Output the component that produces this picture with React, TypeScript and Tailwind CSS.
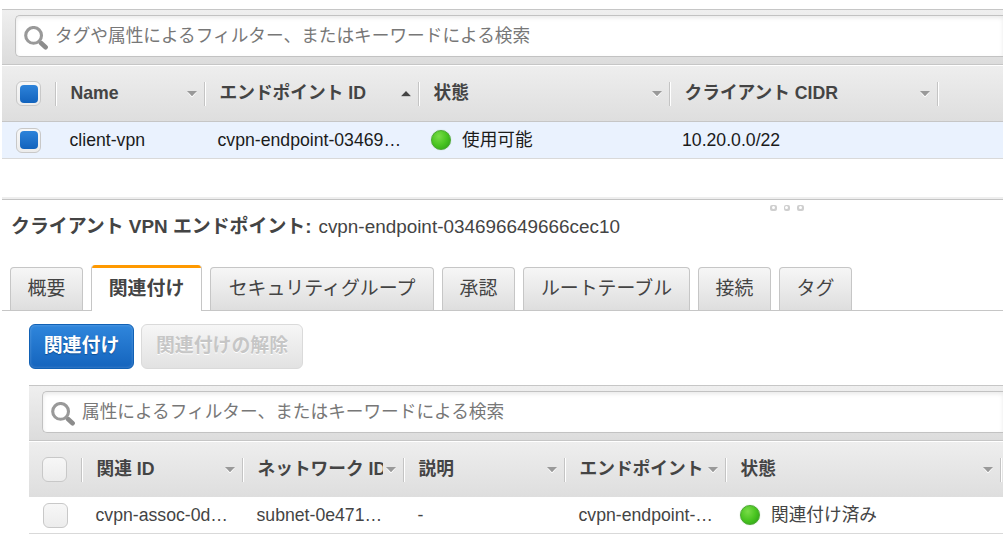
import React from "react";

type Column = { label: string; width: string; arrow?: "up" | "down"; clip?: boolean };

function SearchIcon() {
  return (
    <svg className="shrink-0" width="24" height="24" viewBox="0 0 24 24" fill="none">
      <path d="M14.8 15.2l2 2" stroke="#999" strokeWidth="3" />
      <path d="M17 17l4.6 4.2" stroke="#8c8c8c" strokeWidth="4.6" strokeLinecap="round" />
      <circle cx="9.6" cy="9.4" r="7.9" stroke="#999" strokeWidth="3.1" />
    </svg>
  );
}

function SearchBar({ text }: { text: string }) {
  return (
    <div className="h-[56px] border-y border-[#c6c6c6] bg-linear-to-b from-[#efefef] to-[#dcdcdc] pt-[5px] pl-[13px]">
      <div className="flex h-[42px] items-center rounded-l-[5px] border border-r-0 border-[#c2c2c2] bg-white pl-[8px] shadow-[inset_0_2px_4px_rgba(0,0,0,0.09)]">
        <div className="pt-[3px]">
          <SearchIcon />
        </div>
        <span className="ml-[7px] pb-px text-[17.66px] leading-[24px] text-[#777]">{text}</span>
      </div>
    </div>
  );
}

function Checkbox({ checked }: { checked?: boolean }) {
  return (
    <span className="flex size-[25px] shrink-0 items-center justify-center rounded-[6px] border border-[#c8c8c8] bg-linear-to-b from-[#f7f7f7] to-[#ececec]">
      {checked && <span className="size-[18px] rounded-[4px] bg-linear-to-b from-[#2d83da] to-[#1263bd]" />}
    </span>
  );
}

function Arrow({ up }: { up?: boolean }) {
  return (
    <svg className="shrink-0" width="10" height="6" viewBox="0 0 10 6">
      <path d={up ? "M0 6h10" : "M1 .8l4 5 4-5"} stroke="#fff" strokeWidth="1.2" fill="none" />
      <path d={up ? "M0 5.2L5 0l5 5.2z" : "M0 0h10L5 5.2z"} fill={up ? "#444" : "#999"} />
    </svg>
  );
}

function Divider() {
  return <span className="h-[24px] w-[2px] shrink-0 border-l border-[#c4c4c4] bg-white" />;
}

function HeaderCell({ column }: { column: Column }) {
  return (
    <div className={`flex h-[24px] shrink-0 items-center ${column.width}`}>
      <Divider />
      <span className={`min-w-0 flex-1 overflow-hidden pb-[2px] pl-[13.5px] leading-[24px] ${column.clip ? "mr-[3px]" : ""}`}>
        {column.label}
      </span>
      {column.arrow && (
        <span className="mr-[7px] flex">
          <Arrow up={column.arrow === "up"} />
        </span>
      )}
    </div>
  );
}

function Dot() {
  return (
    <span className="size-[20px] shrink-0 rounded-full border border-[#48a82e] bg-radial-[at_38%_30%] from-[#79dc48] via-[#4ac521] to-[#279c13] shadow-[0_0_1px_rgba(70,150,50,0.6)]" />
  );
}

const endpointColumns: Column[] = [
  { label: "Name", width: "w-[149px]", arrow: "down" },
  { label: "エンドポイント ID", width: "w-[214px]", arrow: "up" },
  { label: "状態", width: "w-[251px]", arrow: "down" },
  { label: "クライアント CIDR", width: "w-[268px]", arrow: "down" },
  { label: "", width: "w-[66px]" },
];

const associationColumns: Column[] = [
  { label: "関連 ID", width: "w-[161px]", arrow: "down" },
  { label: "ネットワーク ID", width: "w-[161px]", arrow: "down", clip: true },
  { label: "説明", width: "w-[161px]", arrow: "down" },
  { label: "エンドポイント", width: "w-[161px]", arrow: "down" },
  { label: "状態", width: "w-[275px]", arrow: "down" },
  { label: "", width: "w-[10px]" },
];

const tabs = [
  { label: "概要", width: "w-[73px]" },
  { label: "関連付け", width: "w-[111px]", active: true },
  { label: "セキュリティグループ", width: "w-[224px]" },
  { label: "承認", width: "w-[73px]" },
  { label: "ルートテーブル", width: "w-[167px]" },
  { label: "接続", width: "w-[73px]" },
  { label: "タグ", width: "w-[73px]" },
];

function EndpointTable() {
  return (
    <section className="ml-[2px]">
      <SearchBar text="タグや属性によるフィルター、またはキーワードによる検索" />
      <div className="flex h-[57px] items-center border-t border-b border-t-white border-b-[#c6c6c6] bg-linear-to-b from-[#eee] to-[#dedede] text-[17.7px] font-bold text-[#444]">
        <div className="w-[53px] shrink-0 pl-[14px]">
          <Checkbox checked />
        </div>
        {endpointColumns.map((c, i) => (
          <HeaderCell key={i} column={c} />
        ))}
      </div>
      <div className="flex h-[37px] items-center border-b border-[#d9d9d9] bg-[#eaf2fe] text-[17.66px] leading-[24px] text-[#1b1b1b]">
        <div className="w-[67.5px] shrink-0 pl-[14px]">
          <Checkbox checked />
        </div>
        <span className="w-[148px] shrink-0">client-vpn</span>
        <span className="w-[213.5px] shrink-0">cvpn-endpoint-03469…</span>
        <span className="flex w-[251px] shrink-0 items-center gap-[11px]">
          <Dot />
          使用可能
        </span>
        <span>10.20.0.0/22</span>
      </div>
    </section>
  );
}

function AssociationTable() {
  return (
    <section className="ml-[29px]">
      <SearchBar text="属性によるフィルター、またはキーワードによる検索" />
      <div className="flex h-[56px] items-center border-t border-white bg-linear-to-b from-[#eee] to-[#dedede] text-[17.7px] font-bold text-[#444]">
        <div className="w-[52px] shrink-0 pl-[13px]">
          <Checkbox />
        </div>
        {associationColumns.map((c, i) => (
          <HeaderCell key={i} column={c} />
        ))}
      </div>
      <div className="flex h-[37px] items-center border-b border-[#d9d9d9] text-[17.66px] leading-[24px] text-[#444]">
        <div className="w-[66.5px] shrink-0 pl-[14px]">
          <Checkbox />
        </div>
        <span className="w-[161px] shrink-0">cvpn-assoc-0d…</span>
        <span className="w-[161px] shrink-0">subnet-0e471…</span>
        <span className="w-[161px] shrink-0">-</span>
        <span className="w-[161.5px] shrink-0">cvpn-endpoint-…</span>
        <span className="flex items-center gap-[11px]">
          <Dot />
          関連付け済み
        </span>
      </div>
    </section>
  );
}

function Splitter() {
  return (
    <div className="ml-[2px] h-[14px] border-t-2 border-[#eee]">
      <div className="border-t border-[#c4c4c4]" />
      <div className="flex gap-[7px] pt-[5px] pl-[768px]">
        {[0, 1, 2].map((i) => (
          <span key={i} className="flex h-[5.5px] w-[6.5px] items-start justify-center rounded-[2px] bg-[#cfcfcf] pt-px">
            <span className="size-[3px] rounded-full bg-white" />
          </span>
        ))}
      </div>
    </div>
  );
}

export default function App() {
  return (
    <main className="h-[542px] w-[1003px] overflow-hidden bg-white pt-[9px] font-['Liberation_Sans','Noto_Sans_CJK_JP',sans-serif] whitespace-nowrap">
      <EndpointTable />
      <div className="h-[38px]" />
      <Splitter />
      <h2 className="mt-[3px] ml-[11px] flex h-[26px] items-center gap-[7px] text-[18.9px] leading-[26px] text-[#444]">
        <span className="font-bold">クライアント VPN エンドポイント:</span>
        <span>cvpn-endpoint-034696649666cec10</span>
      </h2>
      <nav className="ml-[2px] flex h-[71px] items-end gap-[8px] border-b border-[#c6c6c6] pl-[8px]">
        {tabs.map((t) =>
          t.active ? (
            <div
              key={t.label}
              className={`-mb-px flex h-[46px] shrink-0 flex-col overflow-hidden rounded-t-[4px] border-x border-[#c6c6c6] bg-white text-center text-[18.9px] font-bold text-[#444] ${t.width}`}
            >
              <span className="-mx-px h-[3px] shrink-0 bg-[#ff9900]" />
              <span className="pt-[7px] leading-[28px]">{t.label}</span>
            </div>
          ) : (
            <div
              key={t.label}
              className={`h-[43px] shrink-0 rounded-t-[4px] border border-b-0 border-[#c6c6c6] bg-linear-to-b from-[#f6f6f6] to-[#dedede] pt-[7px] text-center text-[18.9px] leading-[28px] text-[#444] ${t.width}`}
            >
              {t.label}
            </div>
          ),
        )}
      </nav>
      <div className="flex h-[74px] gap-[7px] pt-[13px] pl-[29px] text-[18.9px] leading-[28px] font-bold">
        <button className="h-[45px] w-[105px] rounded-[6px] border border-[#1161b5] bg-linear-to-b from-[#2f86dc] to-[#1464bd] pb-[2px] text-white shadow-[inset_0_0_3px_rgba(255,255,255,0.25)] [text-shadow:0_1px_1px_#0d4d94]">
          関連付け
        </button>
        <button className="h-[45px] w-[162px] rounded-[6px] border border-[#dadada] bg-linear-to-b from-[#f6f6f6] to-[#e2e2e2] pb-[2px] text-[#c6c6c6] [text-shadow:0_1px_0_#fff]">
          関連付けの解除
        </button>
      </div>
      <AssociationTable />
    </main>
  );
}
